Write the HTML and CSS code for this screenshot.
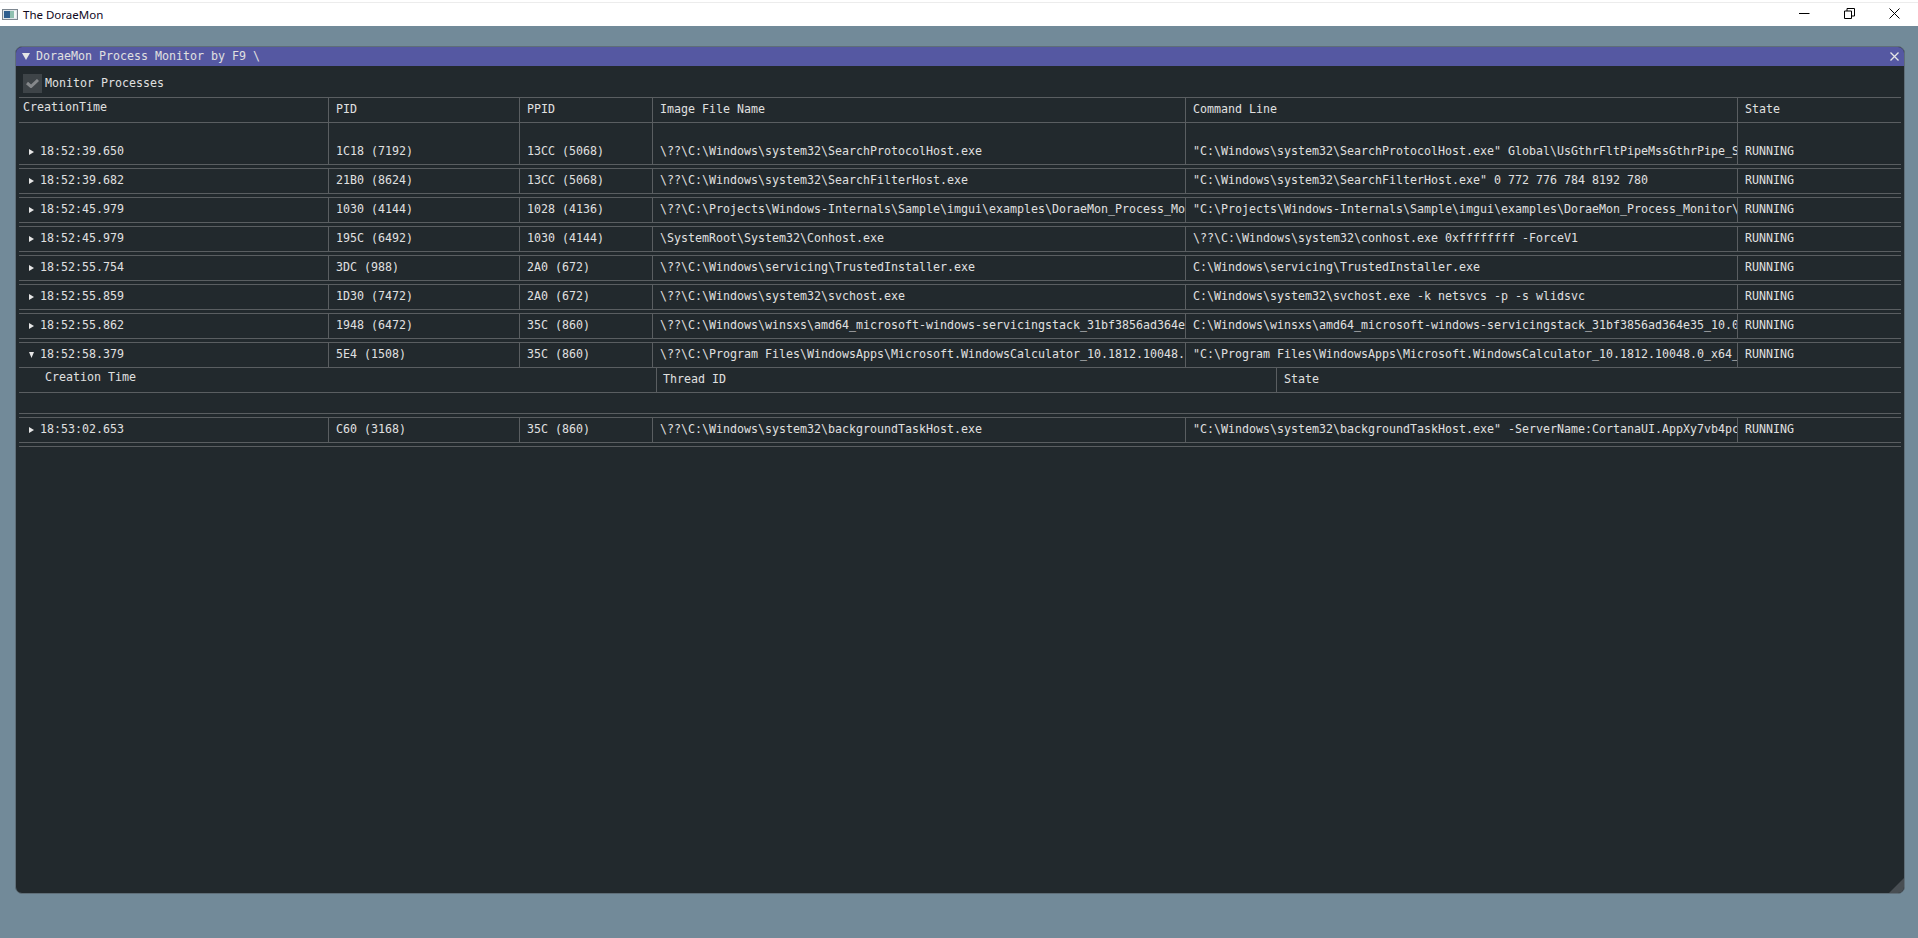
FILE: index.html
```html
<!DOCTYPE html>
<html lang="en">
<head>
<meta charset="utf-8">
<title>The DoraeMon</title>
<link rel="stylesheet" href="styles.css">
</head>
<body>
<header class="os-bar">
  <svg class="os-icon" width="16" height="11" viewBox="0 0 16 11"><rect x="0.5" y="0.5" width="15" height="10" fill="#dfe6ea" stroke="#7d8790"/><rect x="2" y="2" width="6" height="7" fill="#2f5f8f"/><rect x="8" y="2" width="4" height="7" fill="#8fc0b0"/><rect x="12" y="2" width="2" height="7" fill="#f4f6f7"/></svg>
  <span class="os-title">The DoraeMon</span>
  <div class="os-controls">
    <svg width="11" height="11" viewBox="0 0 11 11"><path d="M0 5.5H10.5" stroke="#000" fill="none"/></svg>
    <svg width="11" height="11" viewBox="0 0 11 11"><path d="M.5 3H7.5V10.5H.5ZM3 3V.5H10.5V8H7.5" stroke="#000" fill="none"/></svg>
    <svg width="11" height="11" viewBox="0 0 11 11"><path d="M.5 .5L10.5 10.5M10.5 .5L.5 10.5" stroke="#000" fill="none"/></svg>
  </div>
</header>
<main class="desktop">
  <section class="window">
    <div class="win-title">
      <svg class="win-arrow" width="8" height="7" viewBox="0 0 8 7"><path d="M0 0H8L4 7Z" fill="#e6e6e6"/></svg>
      <span class="win-name">DoraeMon Process Monitor by F9 \</span>
      <svg class="win-close" width="9" height="9" viewBox="0 0 9 9"><path d="M.5 .5L8.5 8.5M8.5 .5L.5 8.5" stroke="#e6e6e6" stroke-width="1.3" fill="none"/></svg>
    </div>
    <div class="win-body">
      <label class="check-row">
        <span class="check-box"><svg width="13" height="9" viewBox="0 0 13 9"><path d="M1 4L5 7.5L12 1" stroke="#85888b" stroke-width="3" fill="none"/></svg></span>
        <span>Monitor Processes</span>
      </label>
      <div class="table">
        <div class="row head">
          <div class="cell first-head">CreationTime</div><div class="cell">PID</div><div class="cell">PPID</div><div class="cell">Image File Name</div><div class="cell">Command Line</div><div class="cell">State</div>
        </div>
        <div class="row tall">
          <div class="cell time"><svg class="arrow" width="5" height="6" viewBox="0 0 5 6"><path d="M0 0L5 3L0 6Z"/></svg>18:52:39.650</div><div class="cell">1C18 (7192)</div><div class="cell">13CC (5068)</div><div class="cell">\??\C:\Windows\system32\SearchProtocolHost.exe</div><div class="cell">"C:\Windows\system32\SearchProtocolHost.exe" Global\UsGthrFltPipeMssGthrPipe_S</div><div class="cell">RUNNING</div>
        </div>
        <div class="row">
          <div class="cell time"><svg class="arrow" width="5" height="6" viewBox="0 0 5 6"><path d="M0 0L5 3L0 6Z"/></svg>18:52:39.682</div><div class="cell">21B0 (8624)</div><div class="cell">13CC (5068)</div><div class="cell">\??\C:\Windows\system32\SearchFilterHost.exe</div><div class="cell">"C:\Windows\system32\SearchFilterHost.exe" 0 772 776 784 8192 780</div><div class="cell">RUNNING</div>
        </div>
        <div class="row">
          <div class="cell time"><svg class="arrow" width="5" height="6" viewBox="0 0 5 6"><path d="M0 0L5 3L0 6Z"/></svg>18:52:45.979</div><div class="cell">1030 (4144)</div><div class="cell">1028 (4136)</div><div class="cell">\??\C:\Projects\Windows-Internals\Sample\imgui\examples\DoraeMon_Process_Mo</div><div class="cell">"C:\Projects\Windows-Internals\Sample\imgui\examples\DoraeMon_Process_Monitor\</div><div class="cell">RUNNING</div>
        </div>
        <div class="row">
          <div class="cell time"><svg class="arrow" width="5" height="6" viewBox="0 0 5 6"><path d="M0 0L5 3L0 6Z"/></svg>18:52:45.979</div><div class="cell">195C (6492)</div><div class="cell">1030 (4144)</div><div class="cell">\SystemRoot\System32\Conhost.exe</div><div class="cell">\??\C:\Windows\system32\conhost.exe 0xffffffff -ForceV1</div><div class="cell">RUNNING</div>
        </div>
        <div class="row">
          <div class="cell time"><svg class="arrow" width="5" height="6" viewBox="0 0 5 6"><path d="M0 0L5 3L0 6Z"/></svg>18:52:55.754</div><div class="cell">3DC (988)</div><div class="cell">2A0 (672)</div><div class="cell">\??\C:\Windows\servicing\TrustedInstaller.exe</div><div class="cell">C:\Windows\servicing\TrustedInstaller.exe</div><div class="cell">RUNNING</div>
        </div>
        <div class="row">
          <div class="cell time"><svg class="arrow" width="5" height="6" viewBox="0 0 5 6"><path d="M0 0L5 3L0 6Z"/></svg>18:52:55.859</div><div class="cell">1D30 (7472)</div><div class="cell">2A0 (672)</div><div class="cell">\??\C:\Windows\system32\svchost.exe</div><div class="cell">C:\Windows\system32\svchost.exe -k netsvcs -p -s wlidsvc</div><div class="cell">RUNNING</div>
        </div>
        <div class="row">
          <div class="cell time"><svg class="arrow" width="5" height="6" viewBox="0 0 5 6"><path d="M0 0L5 3L0 6Z"/></svg>18:52:55.862</div><div class="cell">1948 (6472)</div><div class="cell">35C (860)</div><div class="cell">\??\C:\Windows\winsxs\amd64_microsoft-windows-servicingstack_31bf3856ad364e</div><div class="cell">C:\Windows\winsxs\amd64_microsoft-windows-servicingstack_31bf3856ad364e35_10.0</div><div class="cell">RUNNING</div>
        </div>
        <div class="row open">
          <div class="cell time"><svg class="arrow" width="5" height="6" viewBox="0 0 5 6"><path d="M0 0H5L2.5 6Z"/></svg>18:52:58.379</div><div class="cell">5E4 (1508)</div><div class="cell">35C (860)</div><div class="cell">\??\C:\Program Files\WindowsApps\Microsoft.WindowsCalculator_10.1812.10048.</div><div class="cell">"C:\Program Files\WindowsApps\Microsoft.WindowsCalculator_10.1812.10048.0_x64_</div><div class="cell">RUNNING</div>
        </div>
        <div class="sub-head">
          <div class="cell sub-first">Creation Time</div><div class="cell sub-cell">Thread ID</div><div class="cell">State</div>
        </div>
        <div class="sub-empty"></div>
        <div class="row">
          <div class="cell time"><svg class="arrow" width="5" height="6" viewBox="0 0 5 6"><path d="M0 0L5 3L0 6Z"/></svg>18:53:02.653</div><div class="cell">C60 (3168)</div><div class="cell">35C (860)</div><div class="cell">\??\C:\Windows\system32\backgroundTaskHost.exe</div><div class="cell">"C:\Windows\system32\backgroundTaskHost.exe" -ServerName:CortanaUI.AppXy7vb4pc</div><div class="cell">RUNNING</div>
        </div>
        <div class="end-rule"></div>
      </div>
    </div>
    <div class="grip"></div>
  </section>
</main>
</body>
</html>
```
FILE: styles.css
```css
* { box-sizing: border-box; }
html, body { margin: 0; height: 938px; overflow: hidden; }
body {
  display: flex;
  flex-direction: column;
  background: #728a99;
  font-family: "DejaVu Sans Mono", "Liberation Mono", monospace;
  font-size: 11.63px;
  line-height: 13px;
  color: #e0e0e0;
}

.os-bar {
  flex: none;
  height: 26px;
  display: flex;
  align-items: center;
  padding: 0 18px 0 2px;
  background: #fff;
  border-top: 2px solid #fff;
  box-shadow: inset 0 1px 0 #ececec;
}
.os-icon { flex: none; }
.os-title {
  margin: 1px 0 0 5px;
  font-family: "Noto Sans", "Open Sans", sans-serif;
  font-size: 11.5px;
  line-height: 16px;
  color: #10081c;
}
.os-controls {
  margin: -2px 0 0 auto;
  display: flex;
  gap: 34px;
}

.desktop {
  flex: 1;
  min-height: 0;
  display: flex;
  padding: 20px 13px 44px 15px;
}
.window {
  flex: 1;
  position: relative;
  display: flex;
  flex-direction: column;
  background: #22292d;
  border: 1px solid #5f6e78;
  border-radius: 7px;
  overflow: hidden;
}
.win-title {
  flex: none;
  height: 19px;
  display: flex;
  align-items: center;
  padding: 0 5px 0 6px;
  background: #5558a2;
}
.win-name { margin-left: 6px; }
.win-close { margin-left: auto; }

.win-body {
  flex: 1;
  min-height: 0;
  padding: 8px 2px 0 3px;
}
.check-row {
  display: flex;
  align-items: center;
  gap: 3px;
  height: 19px;
  margin: 0 0 4px 4px;
}
.check-box {
  width: 19px;
  height: 19px;
  display: flex;
  align-items: center;
  justify-content: center;
  background: #3e4448;
}

.table { width: 1882px; }
.row, .sub-head, .sub-empty, .end-rule { border-bottom: 1px solid #5a5e61; }
.row {
  display: grid;
  grid-template-columns: 309px 191px 133px 533px 552px 164px;
  height: 26px;
  border-top: 1px solid #5a5e61;
  margin-bottom: 3px;
}
.row.head { margin-bottom: 0; }
.row.tall { height: 42px; border-top: 0; padding-top: 17px; }
.row.tall .cell { margin-top: -17px; padding-top: 17px; }
.row.open { margin-bottom: 0; }
.cell {
  display: flex;
  align-items: center;
  min-width: 0;
  overflow: hidden;
  white-space: pre;
  padding: 0 0 1px 7px;
  border-left: 1px solid #5a5e61;
}
.cell:first-child { border-left: 0; }
.cell.first-head { padding: 0 0 5px 4px; }
.cell.time { padding-left: 10px; }
.cell.sub-cell { padding-left: 6px; }
.arrow { flex: none; margin-right: 6px; fill: #e6e6e6; }

.sub-head {
  display: grid;
  grid-template-columns: 637px 620px 625px;
  height: 25px;
}
.cell.sub-first { padding: 0 0 5px 26px; }
.sub-empty { height: 21px; margin-bottom: 3px; }
.end-rule { border-top: 1px solid #5a5e61; height: 1px; border-bottom: 0; }

.grip {
  position: absolute;
  right: 0;
  bottom: 0;
  width: 15px;
  height: 15px;
  background: #484e53;
  clip-path: polygon(100% 0, 100% 100%, 0 100%);
}
```
